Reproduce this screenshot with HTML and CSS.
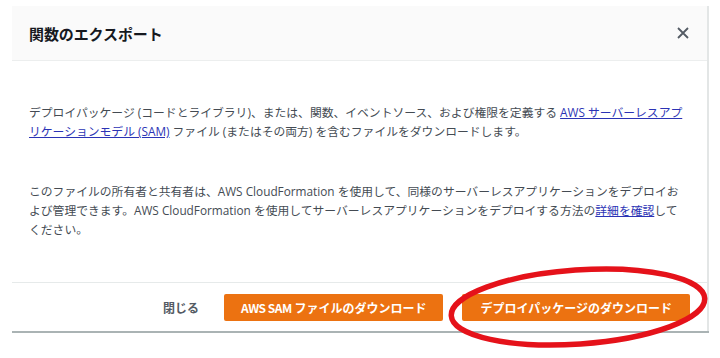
FILE: index.html
```html
<!DOCTYPE html>
<html lang="ja">
<head>
<meta charset="utf-8">
<title>関数のエクスポート</title>
<link rel="stylesheet" href="styles.css">
</head>
<body>
<div class="page">
  <div class="modal">
    <div class="modal-header">
      <h2 class="modal-title">関数のエクスポート</h2>
      <button class="close-btn" aria-label="閉じる">
        <svg width="12" height="12" viewBox="0 0 12 12"><path d="M1 1L11 11M11 1L1 11" stroke="#545b64" stroke-width="1.8" fill="none"/></svg>
      </button>
    </div>
    <div class="modal-body">
      <p class="para">デプロイパッケージ (コードとライブラリ)、または、関数、イベントソース、および権限を定義する <a class="link" href="#">AWS サーバーレスアプリケーションモデル (SAM)</a> ファイル (またはその両方) を含むファイルをダウンロードします。</p>
      <p class="para">このファイルの所有者と共有者は、AWS CloudFormation を使用して、同様のサーバーレスアプリケーションをデプロイおよび管理できます。AWS CloudFormation を使用してサーバーレスアプリケーションをデプロイする方法の<a class="link" href="#">詳細を確認</a>してください。</p>
    </div>
    <div class="modal-footer">
      <button class="btn btn-link">閉じる</button>
      <button class="btn btn-primary btn-sam"><span class="btn-latin">AWS SAM</span> ファイルのダウンロード</button>
      <button class="btn btn-primary">デプロイパッケージのダウンロード</button>
    </div>
  </div>
  <svg class="highlight" width="720" height="358" viewBox="0 0 720 358">
    <ellipse cx="578" cy="307" rx="127" ry="37" transform="rotate(-4 578 307)" fill="none" stroke="#e5121a" stroke-width="5.5"/>
  </svg>
</div>
</body>
</html>
```

FILE: styles.css
```css
* { box-sizing: border-box; }
html, body { margin: 0; padding: 0; background: #ffffff; }
body {
  font-family: "Open Sans", "Noto Sans CJK JP", sans-serif;
  color: #444b53;
}
.page {
  position: relative;
  width: 720px;
  height: 358px;
  padding: 6px 0 0 12px;
}
.modal {
  width: 697px;
  background: #ffffff;
  border-right: 2px solid #e3e6e6;
  box-shadow: 0 2px 0 #aab3b4;
}
.modal-header {
  height: 55px;
  background: #fafafa;
  border-bottom: 1px solid #eceeee;
  display: flex;
  align-items: center;
  justify-content: space-between;
  padding: 0 18px 0 17px;
}
.modal-title {
  margin: 0;
  font-size: 15px;
  font-weight: 700;
  color: #16191f;
  letter-spacing: -0.1px;
}
.close-btn {
  border: 0;
  background: none;
  padding: 0;
  width: 12px;
  height: 12px;
  display: flex;
}
.modal-body {
  padding: 42px 17px 43px 17px;
  display: flex;
  flex-direction: column;
  gap: 41px;
}
.para {
  margin: 0;
  max-width: 657px;
  font-size: 11.8px;
  line-height: 19px;
}
.link {
  color: #2b33b5;
  text-decoration: underline;
}
.modal-footer {
  border-top: 1px solid #e6eaea;
  height: 49px;
  display: flex;
  align-items: flex-start;
  justify-content: flex-end;
  padding: 11px 17px 0 0;
}
.btn {
  font-family: "Noto Sans CJK JP", sans-serif;
  font-size: 12px;
  font-weight: 700;
  height: 27px;
  border: 0;
  border-radius: 2px;
  padding: 0 18px;
  cursor: pointer;
}
.btn-link {
  background: none;
  color: #545b64;
  margin-right: 7px;
}
.btn-primary {
  background: #ec7211;
  color: #ffffff;
}
.btn-sam { padding: 0 17px; }
.btn-latin { letter-spacing: -0.5px; }
.btn-primary + .btn-primary { margin-left: 19px; }
.highlight {
  position: absolute;
  left: 0;
  top: 0;
  pointer-events: none;
}
```
